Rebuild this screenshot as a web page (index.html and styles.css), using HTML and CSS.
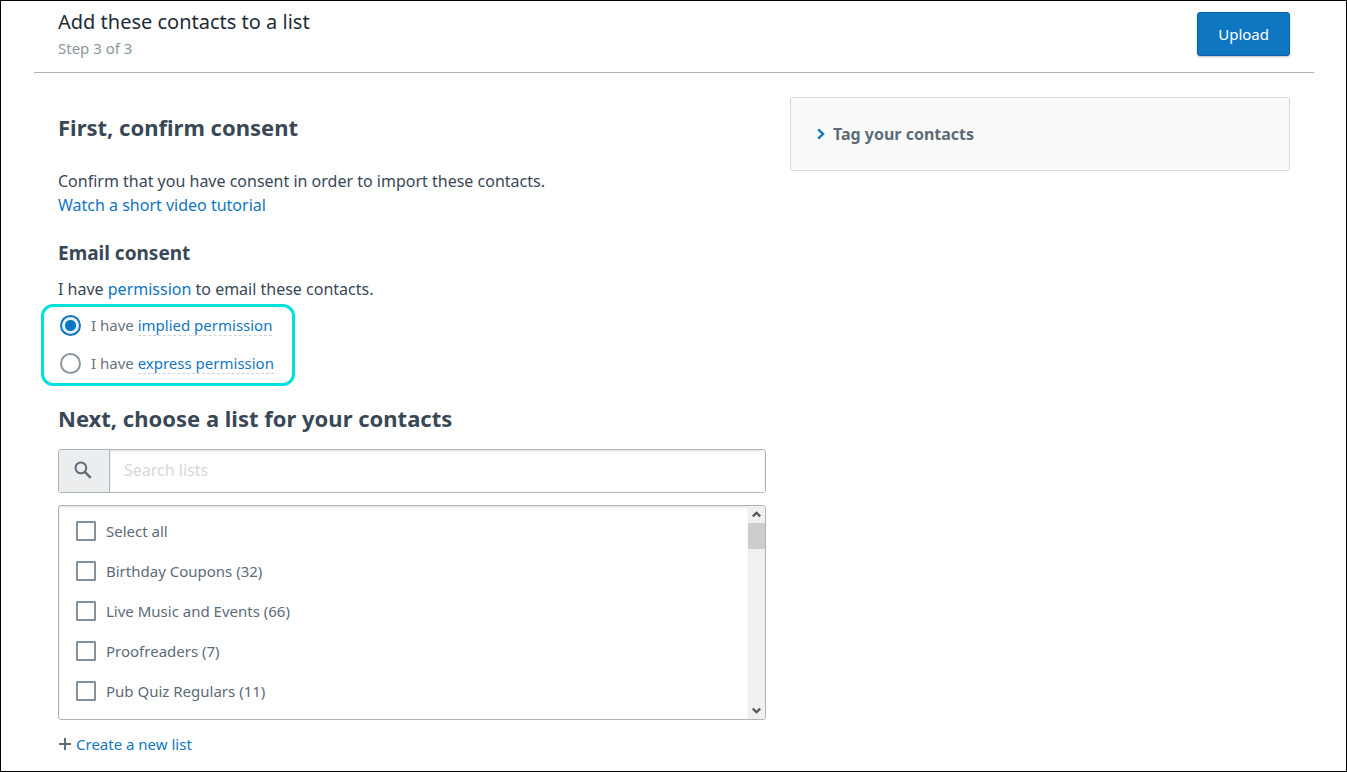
FILE: index.html
```html
<!DOCTYPE html>
<html lang="en">
<head>
    <meta charset="UTF-8">
    <meta name="viewport" content="width=device-width, initial-scale=1.0">
    <title>Add contacts</title>
    <link rel="stylesheet" href="styles.css">
</head>
<body>
    <div class="page">
        <header class="header">
            <div>
                <h1>Add these contacts to a list</h1>
                <p class="step">Step 3 of 3</p>
            </div>
            <button type="button" class="upload">Upload</button>
        </header>

        <main class="content">
            <form class="left">
                <h2>First, confirm consent</h2>
                <p class="intro">Confirm that you have consent in order to import these contacts.<br>
                    <a href="#">Watch a short video tutorial</a></p>

                <h3>Email consent</h3>
                <p>I have <a href="#">permission</a> to email these contacts.</p>

                <fieldset class="consent" aria-label="Email consent">
                    <div class="option">
                        <input type="radio" id="implied" name="consent" checked>
                        <label for="implied">I have <a href="#" class="hint">implied permission</a></label>
                    </div>
                    <div class="option">
                        <input type="radio" id="express" name="consent">
                        <label for="express">I have <a href="#" class="hint">express permission</a></label>
                    </div>
                </fieldset>

                <h2 class="next">Next, choose a list for your contacts</h2>

                <div class="search">
                    <label for="search" class="search-icon" aria-label="Search lists">
                        <svg width="18" height="18" viewBox="0 0 18 18" fill="none" stroke="#5c6b78">
                            <circle cx="6.9" cy="6.9" r="5.4" stroke-width="2"/>
                            <path d="M10.8 10.8l6 6" stroke-width="2.4"/>
                        </svg>
                    </label>
                    <input type="text" id="search" placeholder="Search lists">
                </div>

                <div class="lists">
                    <div class="list-items">
                        <label><input type="checkbox"> Select all</label>
                        <label><input type="checkbox"> Birthday Coupons (32)</label>
                        <label><input type="checkbox"> Live Music and Events (66)</label>
                        <label><input type="checkbox"> Proofreaders (7)</label>
                        <label><input type="checkbox"> Pub Quiz Regulars (11)</label>
                    </div>
                    <div class="scrollbar" aria-hidden="true">
                        <span class="arrow">
                            <svg width="9" height="7" viewBox="0 0 9 7"><path d="M.8 5.4L4.5 1.7l3.7 3.7" fill="none" stroke="#555" stroke-width="2.2"/></svg>
                        </span>
                        <span class="thumb"></span>
                        <span class="arrow down">
                            <svg width="9" height="7" viewBox="0 0 9 7"><path d="M.8 1.6l3.7 3.7 3.7-3.7" fill="none" stroke="#555" stroke-width="2.2"/></svg>
                        </span>
                    </div>
                </div>

                <a href="#" class="create">
                    <svg width="12" height="12" viewBox="0 0 12 12"><path d="M6 0v12M0 6h12" stroke="#5c6b78" stroke-width="2"/></svg>
                    Create a new list
                </a>
            </form>

            <aside>
                <button type="button" class="tag" aria-expanded="false">
                    <svg width="8" height="12" viewBox="0 0 8 12"><path d="M1.2 1.4L6 6l-4.8 4.6" fill="none" stroke="#0f76c2" stroke-width="2.4"/></svg>
                    Tag your contacts
                </button>
            </aside>
        </main>
    </div>
</body>
</html>
```
FILE: styles.css
```css
* {
    box-sizing: border-box;
}

body {
    margin: 0;
    font-family: "Noto Sans", "Open Sans", sans-serif;
    font-size: 16px;
    line-height: 24px;
    color: #394856;
    background-color: white;
}

h1, h2, h3, p {
    margin: 0;
}

a {
    color: #0f76c2;
    text-decoration: none;
}

svg {
    flex: none;
}

.page {
    min-height: 100vh;
    padding: 0 32px 0 33px;
    border: 1px solid black;
}

.header {
    display: flex;
    justify-content: space-between;
    align-items: center;
    padding: 7px 24px 12px;
    border-bottom: 1px solid #adb5bc;
}

h1 {
    font-size: 20px;
    font-weight: normal;
    line-height: 28px;
    color: #202c38;
}

.step {
    font-size: 15px;
    color: #8a95a0;
}

.upload {
    height: 44px;
    padding: 0 20px;
    border: 1px solid #0a62a6;
    border-radius: 3px;
    background-color: #0f76c2;
    box-shadow: 0 1px 2px rgba(0, 0, 0, 0.25);
    color: white;
    font: inherit;
    font-size: 15px;
    cursor: pointer;
}

.content {
    display: grid;
    grid-template-columns: 708fr 500fr;
    gap: 24px;
    align-items: start;
    padding: 24px 24px 0;
}

h2 {
    margin-top: 15px;
    font-size: 22px;
    line-height: 30px;
}

h3 {
    margin: 24px 0 12px;
    font-size: 19px;
    line-height: 24px;
}

.intro {
    margin-top: 27px;
}

.consent {
    display: flex;
    flex-direction: column;
    gap: 2px;
    width: fit-content;
    margin: 3px 0 0 -17px;
    padding: 0 18px 2px 16px;
    border: 3px solid #00e0dc;
    border-radius: 12px;
}

.option {
    display: flex;
    align-items: center;
    gap: 10px;
    height: 36px;
    font-size: 15px;
    color: #66727d;
}

.option label {
    line-height: 20px;
}

.hint {
    border-bottom: 1px dashed #d0d4d8;
}

input {
    appearance: none;
    margin: 0;
}

input[type="radio"] {
    width: 21px;
    height: 21px;
    border: 2px solid #8b96a0;
    border-radius: 50%;
}

input[type="radio"]:checked {
    border-color: #0f76c2;
    background: radial-gradient(circle, #0f76c2 5px, #e3f0fa 6px);
}

.next {
    margin-top: 17px;
}

.search {
    display: flex;
    height: 44px;
    margin-top: 16px;
    border: 1px solid #adb5bc;
    border-radius: 3px;
    overflow: hidden;
}

.search-icon {
    display: flex;
    align-items: center;
    justify-content: center;
    width: 51px;
    padding: 0 2px 2px 0;
    border-right: 1px solid #adb5bc;
    background-color: #ebedef;
}

.search input {
    flex: 1;
    padding: 0 14px 2px;
    border: none;
    box-shadow: inset 0 1px 2px rgba(0, 0, 0, 0.12);
    font: inherit;
}

.search input::placeholder {
    color: #d3d8dd;
}

.lists {
    display: flex;
    margin-top: 12px;
    border: 1px solid #adb5bc;
    border-radius: 3px;
    overflow: hidden;
}

.list-items {
    flex: 1;
    padding: 5px 17px 8px;
    box-shadow: inset 0 1px 2px rgba(0, 0, 0, 0.12);
}

.list-items label {
    display: flex;
    align-items: center;
    gap: 10px;
    height: 40px;
    font-size: 15px;
    color: #5c6b78;
}

input[type="checkbox"] {
    width: 20px;
    height: 20px;
    border: 2px solid #85919c;
    border-radius: 1px;
}

input[type="checkbox"]:checked {
    background-color: #0f76c2;
}

.scrollbar {
    display: flex;
    flex-direction: column;
    width: 17px;
    background-color: #f0f0f0;
}

.arrow {
    display: flex;
    align-items: center;
    justify-content: center;
    height: 17px;
}

.thumb {
    height: 26px;
    background-color: #cdcdcd;
}

.down {
    margin-top: auto;
}

.create {
    display: flex;
    align-items: center;
    gap: 5px;
    width: fit-content;
    margin: 12px 0 0 1px;
    font-size: 15px;
}

.tag {
    display: flex;
    align-items: center;
    gap: 8px;
    width: 100%;
    height: 74px;
    padding: 0 26px;
    border: 1px solid #d8dbdd;
    border-radius: 3px;
    background-color: #fafafa;
    color: #5c6b78;
    font: inherit;
    font-weight: bold;
    cursor: pointer;
}
```
